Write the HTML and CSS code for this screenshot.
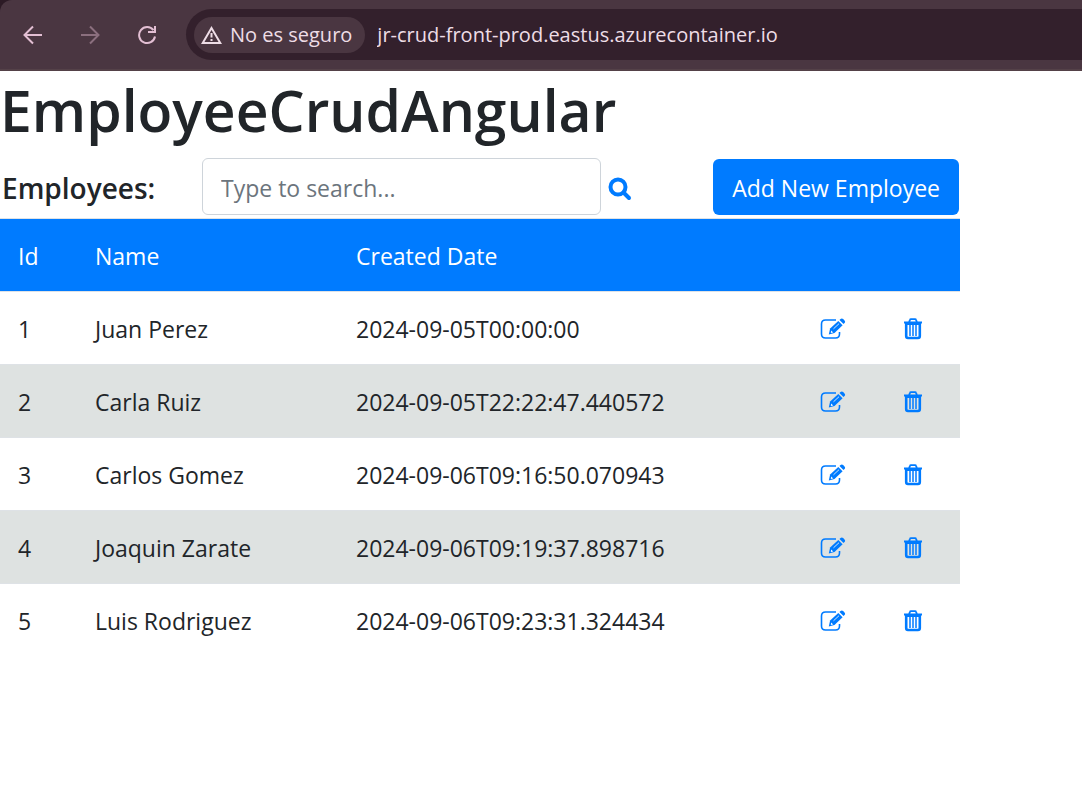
FILE: index.html
```html
<!DOCTYPE html>
<html lang="es">
<head>
<meta charset="utf-8">
<meta name="viewport" content="width=device-width, initial-scale=1">
<title>EmployeeCrudAngular</title>
<link rel="stylesheet" href="styles.css">
</head>
<body>
<svg class="sprite" aria-hidden="true">
  <symbol id="edit" viewBox="0 0 26 22">
    <path d="M16 2H5.500Q1.500 2 1.500 6V16Q1.500 20 5.500 20H15.500Q19.500 20 19.500 16V14" fill="none" stroke="currentColor" stroke-width="1.600"/>
    <path d="M8.800 16.500l1.300-6L18.300 3l4.300 4.200L14.500 15z" fill="currentColor"/>
    <path d="M19.500 2l1-1q1.300-1.200 2.700.100l1.300 1.300q1.200 1.300 0 2.600l-1 .9z" fill="currentColor"/>
    <path d="M11.200 12.400l2 2-2.400.700z" fill="#fff"/>
    <path d="M13.500 10.800l5.500-5.100" stroke="#fff" stroke-width=".8"/>
  </symbol>
  <symbol id="trash" viewBox="0 0 20 22">
    <path d="M1 4.500H19M6 4.300L6.900 2Q7.100 1.200 8 1.200H12Q12.900 1.200 13.100 2L14 4.300" fill="none" stroke="currentColor" stroke-width="1.800"/>
    <path d="M3.200 4.500V18Q3.200 20 5 20H15Q16.800 20 16.800 18V4.500" fill="none" stroke="currentColor" stroke-width="2.600"/>
    <path d="M3 6H17" stroke="currentColor" stroke-width="2"/>
    <path d="M7 6V18M10 6V18M13 6V18" stroke="currentColor" stroke-width="1.500"/>
  </symbol>
</svg>
<header class="browser"><div class="toolbar">
  <button class="nav" aria-label="Atrás"><svg width="20" height="20" viewBox="0 0 20 20"><path d="M19 10H2M10 1.500L1.500 10 10 18.500"/></svg></button>
  <button class="nav nav-off" aria-label="Adelante" disabled><svg width="20" height="20" viewBox="0 0 20 20"><path d="M1 10H18M10 1.500L18.500 10 10 18.500"/></svg></button>
  <button class="nav" aria-label="Recargar"><svg width="20" height="20" viewBox="0 0 20 20"><path d="M18 11.500A8 8 0 1 1 16.500 5.200M18 1V7H11"/></svg></button>
  <div class="address">
    <button class="security"><svg width="21" height="18" viewBox="0 0 21 18"><path d="M10.500 2L19.300 17H1.700Z M10.500 7V11.500M10.500 13V15"/></svg>No es seguro</button>
    <input class="url" aria-label="Dirección" value="jr-crud-front-prod.eastus.azurecontainer.io">
  </div>
</div></header>
<main>
  <h1>EmployeeCrudAngular</h1>
  <div class="actions">
    <label for="search">Employees:</label>
    <input id="search" class="search" type="text" placeholder="Type to search...">
    <button class="find" aria-label="Search"><svg width="24" height="24" viewBox="0 0 24 24"><circle cx="10" cy="10" r="7.500"/><path d="M16 16L21 21"/></svg></button>
    <button class="add">Add New Employee</button>
  </div>
  <table>
    <thead><tr><th class="id">Id</th><th class="name">Name</th><th class="date">Created Date</th><th class="tool"></th><th class="tool"></th></tr></thead>
    <tbody>
      <tr><td>1</td><td>Juan Perez</td><td>2024-09-05T00:00:00</td><td><button class="icon" aria-label="Edit"><svg width="26" height="22"><use href="#edit"/></svg></button></td><td><button class="icon" aria-label="Delete"><svg width="20" height="22"><use href="#trash"/></svg></button></td></tr>
      <tr><td>2</td><td>Carla Ruiz</td><td>2024-09-05T22:22:47.440572</td><td><button class="icon" aria-label="Edit"><svg width="26" height="22"><use href="#edit"/></svg></button></td><td><button class="icon" aria-label="Delete"><svg width="20" height="22"><use href="#trash"/></svg></button></td></tr>
      <tr><td>3</td><td>Carlos Gomez</td><td>2024-09-06T09:16:50.070943</td><td><button class="icon" aria-label="Edit"><svg width="26" height="22"><use href="#edit"/></svg></button></td><td><button class="icon" aria-label="Delete"><svg width="20" height="22"><use href="#trash"/></svg></button></td></tr>
      <tr><td>4</td><td>Joaquin Zarate</td><td>2024-09-06T09:19:37.898716</td><td><button class="icon" aria-label="Edit"><svg width="26" height="22"><use href="#edit"/></svg></button></td><td><button class="icon" aria-label="Delete"><svg width="20" height="22"><use href="#trash"/></svg></button></td></tr>
      <tr><td>5</td><td>Luis Rodriguez</td><td>2024-09-06T09:23:31.324434</td><td><button class="icon" aria-label="Edit"><svg width="26" height="22"><use href="#edit"/></svg></button></td><td><button class="icon" aria-label="Delete"><svg width="20" height="22"><use href="#trash"/></svg></button></td></tr>
    </tbody>
  </table>
</main>
</body>
</html>
```
FILE: styles.css
```css
* { box-sizing: border-box; }
body { margin: 0; background: #fff; color: #212529; font-family: "Segoe UI", "Open Sans", "Noto Sans", sans-serif; font-size: 23px; line-height: 36px; }
button, input { font: inherit; color: inherit; margin: 0; }
button { padding: 0; border: 0; background: none; }
svg { display: block; }
.sprite { position: absolute; width: 0; height: 0; }
.browser { background: #2c1a25; }
.toolbar { display: flex; align-items: center; height: 71px; padding-left: 23px; background: #4a3641; border-bottom: 2px solid #544148; border-top-left-radius: 12px; }
.nav { width: 20px; margin-right: 37px; color: #e3bfd3; }
.nav-off { color: #8b6f7e; }
.nav svg { fill: none; stroke: currentColor; stroke-width: 2; }
.address { flex: 1; display: flex; align-items: center; height: 51px; margin-left: -8px; padding-left: 8px; background: #33202c; border-radius: 26px 0 0 26px; color: #eedde6; font-size: 20px; }
.security { display: flex; align-items: center; gap: 8px; height: 36px; padding: 0 13px 0 7px; border-radius: 18px; background: #4a3641; white-space: nowrap; }
.security svg { fill: none; stroke: currentColor; stroke-width: 2; }
.url { flex: 1; min-width: 0; margin-left: 12px; padding: 0; border: 0; background: none; }
main { max-width: 960px; }
h1 { margin: 0; padding: 3px 0 12px; font-size: 57px; line-height: 72px; font-weight: 600; }
.actions { display: flex; align-items: center; padding: 0 1px 3px 2px; }
.actions label { width: 200px; padding-top: 2px; font-size: 28px; font-weight: 600; }
.search { flex: 1; min-width: 0; height: 57px; padding: 2px 18px 0; border: 1px solid #ced4da; border-radius: 6px; }
.search::placeholder { color: #6c757d; opacity: 1; }
.find { margin: 4px 81px 0 7px; color: #007bff; }
.find svg { fill: none; stroke: currentColor; stroke-width: 4; stroke-linecap: round; }
.add { height: 56px; padding: 2px 19px 0; border-radius: 6px; background: #007bff; color: #fff; }
table { width: 100%; border-collapse: collapse; table-layout: fixed; }
th, td { height: 73px; padding: 2px 18px 0; text-align: left; font-weight: 400; border-top: 1px solid #dee2e6; }
thead { background: #007bff; color: #fff; }
.id { width: 77px; }
.name { width: 261px; }
.tool { width: 79px; }
tbody tr:nth-child(even) { background: #dee2e1; }
.icon { display: block; color: #007bff; }
td:last-child { padding-left: 22px; }
```
